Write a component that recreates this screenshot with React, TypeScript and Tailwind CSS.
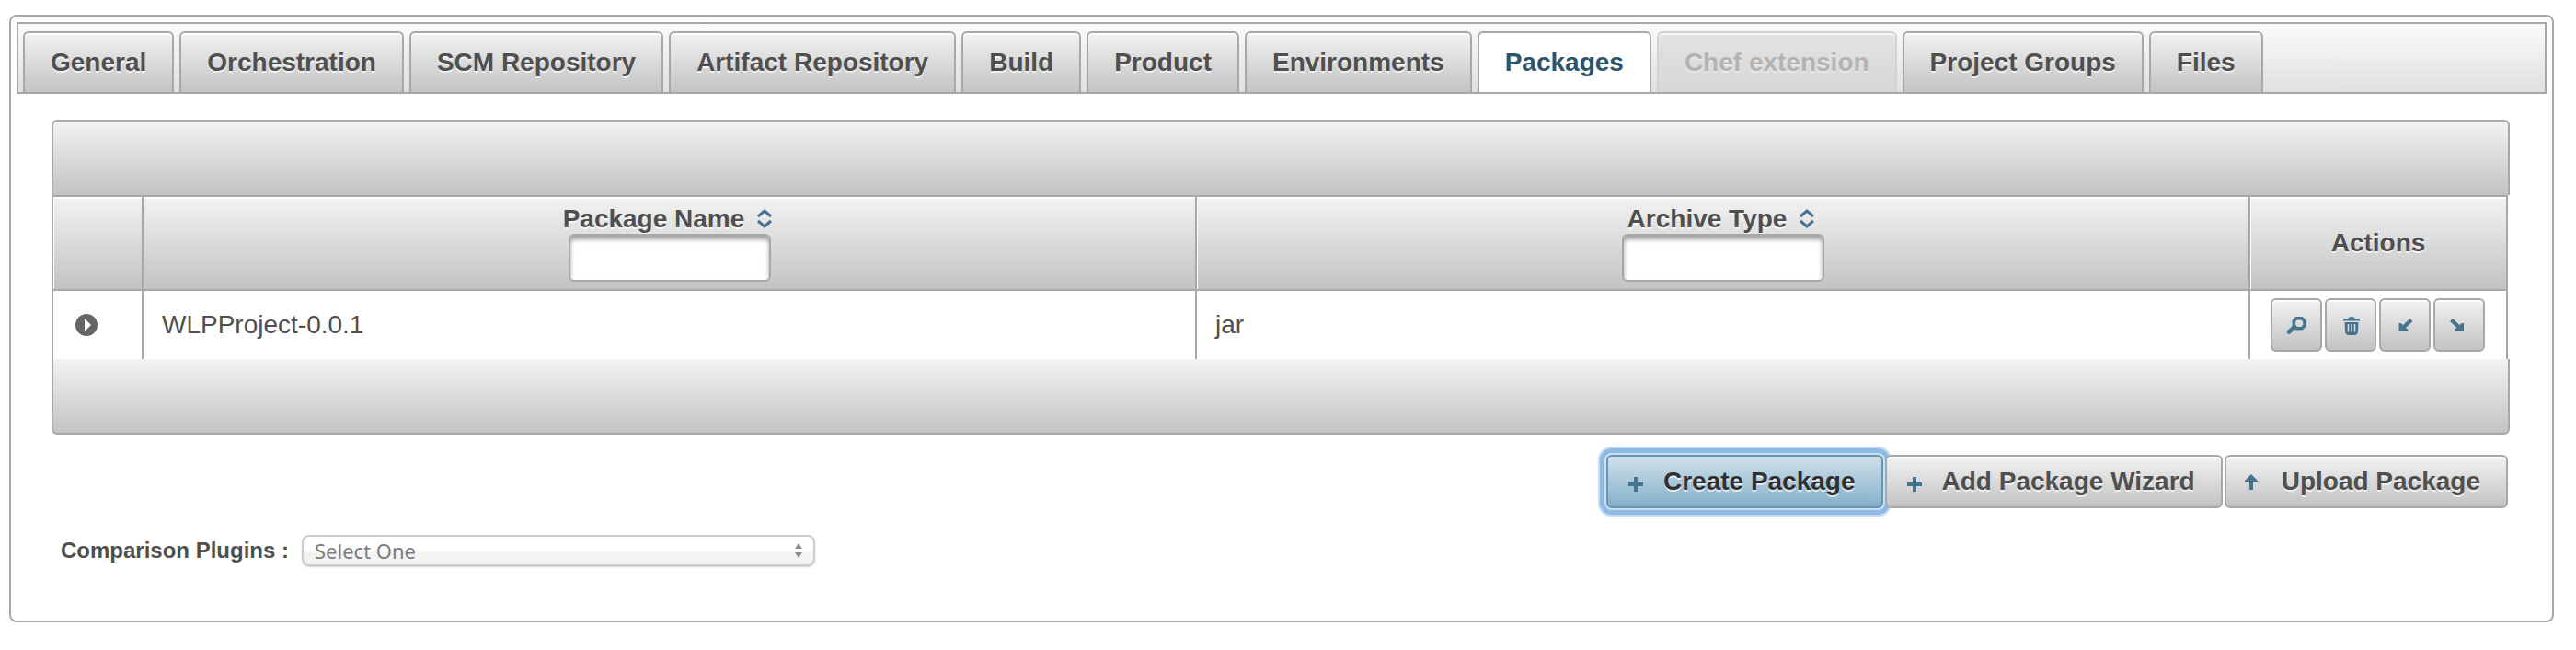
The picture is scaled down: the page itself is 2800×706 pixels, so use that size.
import React from 'react';

const tabs = [
  { label: 'General' },
  { label: 'Orchestration' },
  { label: 'SCM Repository' },
  { label: 'Artifact Repository' },
  { label: 'Build' },
  { label: 'Product' },
  { label: 'Environments' },
  { label: 'Packages', state: 'active' },
  { label: 'Chef extension', state: 'disabled' },
  { label: 'Project Groups' },
  { label: 'Files' },
];

const packages = [{ name: 'WLPProject-0.0.1', type: 'jar' }];

const raised =
  'border-2 border-[#a8a8a8] bg-linear-to-b from-[#f2f2f2] to-[#c3c3c3] shadow-[inset_0_2px_0_#ffffff] [text-shadow:0_2px_0_rgba(255,255,255,0.7)]';

const strip = 'h-[82px] border-2 border-[#a8a8a8] bg-linear-to-b from-[#f3f3f3] to-[#c3c3c3]';

const headCell =
  'h-[102px] border-t-2 border-l-2 border-[#a8a8a8] bg-linear-to-b from-[#f3f3f3] to-[#c3c3c3] p-0 text-center font-bold shadow-[inset_1px_2px_0_#ffffff] [text-shadow:0_2px_0_rgba(255,255,255,0.7)]';

const bodyCell = 'h-[76px] border-t-2 border-l-2 border-[#a8a8a8]';

const tabClass = (state?: string) => {
  if (state === 'active') {
    return 'border-2 border-[#a8a8a8] bg-white text-[#2c556c]';
  }
  if (state === 'disabled') {
    return 'border-2 border-[#d2d2d2] bg-linear-to-b from-[#e4e4e4] to-[#d6d6d6] text-[#b3b3b3] shadow-[inset_0_2px_0_#f4f4f4] [text-shadow:0_2px_0_rgba(255,255,255,0.4)]';
  }
  return raised;
};

const SortIcon: React.FC = () => (
  <svg width="20" height="24" viewBox="0 0 20 24" fill="none" stroke="#46748e" strokeWidth="3">
    <path d="M1 9 L8 3 L15 9" />
    <path d="M1 14 L8 20 L15 14" />
  </svg>
);

const PlusIcon: React.FC = () => (
  <svg width="32" height="32" viewBox="0 0 32 32" stroke="#46748e" strokeWidth="4">
    <path d="M8 19 H24 M16 11 V27" />
  </svg>
);

const UpIcon: React.FC = () => (
  <svg width="32" height="32" viewBox="0 0 32 32" fill="#46748e">
    <path d="M13 8 L20 15 V16 H15 V25 H11 V16 H6 V15 Z" />
  </svg>
);

const SearchIcon: React.FC = () => (
  <svg width="32" height="32" viewBox="0 0 32 32" fill="none" stroke="#46748e">
    <path d="M16 8.700 H22 L25 11.700 V16.800 L22 19.800 H16 L13.300 16.800 V11.700 Z" strokeWidth="3.600" strokeLinejoin="round" />
    <path d="M14 18 L8 23.500" strokeWidth="4.500" strokeLinecap="round" />
  </svg>
);

const TrashIcon: React.FC = () => (
  <svg width="32" height="32" viewBox="0 0 32 32" fill="#46748e">
    <path d="M8 9 H13 Q14 7 17 7 Q20 7 21 9 H26 V11.500 H8 Z" />
    <path d="M9.500 13 H24.500 L24 23 Q23.500 27 20 27 H14 Q10.500 27 10 23 Z" />
    <path d="M13.500 15 V23.500 M17 15 V23.500 M20.500 15 V23.500" stroke="#d4dade" strokeWidth="1.500" />
  </svg>
);

const DownLeftIcon: React.FC = () => (
  <svg width="32" height="32" viewBox="0 0 32 32" fill="#46748e">
    <path d="M21.500 9 L24.500 12 L17 19 L19.500 21 V23 H9.500 V14 H11.500 L14 16 Z" />
  </svg>
);

const DownRightIcon: React.FC = () => (
  <svg width="32" height="32" viewBox="0 0 32 32" fill="#46748e">
    <path d="M9 9 L6 12 L13.500 19 L11 21 V23 H21 V14 H19 L16.500 16 Z" />
  </svg>
);

const actions = [
  { label: 'View', icon: <SearchIcon /> },
  { label: 'Delete', icon: <TrashIcon /> },
  { label: 'Import', icon: <DownLeftIcon /> },
  { label: 'Export', icon: <DownRightIcon /> },
];

const TabBar: React.FC = () => (
  <nav className="flex gap-[6px] border-2 border-[#a8a8a8] bg-linear-to-b from-[#fbfbfb] to-[#e0e0e0] px-[5px] pt-2">
    {tabs.map((tab) => (
      <button
        key={tab.label}
        type="button"
        disabled={tab.state === 'disabled'}
        className={`h-[66px] rounded-t-md border-b-0 px-7 font-bold ${tabClass(tab.state)}`}
      >
        {tab.label}
      </button>
    ))}
  </nav>
);

const FilterHeader: React.FC<{ id: string; label: string }> = ({ id, label }) => (
  <div className="flex flex-col items-center">
    <label htmlFor={id} className="flex items-center gap-[14px]">
      {label}
      <SortIcon />
    </label>
    <input
      id={id}
      className="h-[52px] w-[220px] rounded-md border-2 border-[#a8a8a8] bg-white px-2 shadow-[inset_0_4px_5px_#a0a0a0]"
    />
  </div>
);

const PackageTable: React.FC = () => (
  <div>
    <div className={`rounded-t-md border-b-0 ${strip}`} />
    <div className="pr-[2px]">
      <table className="w-full table-fixed border-separate border-spacing-0 border-r-2 border-[#a8a8a8]">
        <colgroup>
          <col className="w-[98px]" />
          <col />
          <col />
          <col className="w-[280px]" />
        </colgroup>
        <thead>
          <tr>
            <th className={headCell} />
            <th className={headCell}>
              <FilterHeader id="package-name" label="Package Name" />
            </th>
            <th className={headCell}>
              <FilterHeader id="archive-type" label="Archive Type" />
            </th>
            <th className={headCell}>Actions</th>
          </tr>
        </thead>
        <tbody>
          {packages.map((item) => (
            <tr key={item.name}>
              <td className={`${bodyCell} pl-6`}>
                <button type="button" aria-label="Expand" className="block">
                  <svg width="24" height="24" viewBox="0 0 24 24">
                    <circle cx="12" cy="12" r="12" fill="#666666" />
                    <path d="M10 5 L17 12 L10 19 Z" fill="#ffffff" />
                  </svg>
                </button>
              </td>
              <td className={`${bodyCell} px-5`}>{item.name}</td>
              <td className={`${bodyCell} px-5`}>{item.type}</td>
              <td className={bodyCell}>
                <div className="flex justify-center gap-[3px] pr-[2px]">
                  {actions.map((action) => (
                    <button
                      key={action.label}
                      type="button"
                      aria-label={action.label}
                      className={`flex h-[58px] w-14 items-center justify-center rounded-md ${raised}`}
                    >
                      {action.icon}
                    </button>
                  ))}
                </div>
              </td>
            </tr>
          ))}
        </tbody>
      </table>
    </div>
    <div className={`rounded-b-md border-t-0 ${strip}`} />
  </div>
);

const App: React.FC = () => {
  return (
    <main className="min-h-screen bg-white px-[10px] pt-4 pr-6 pb-[30px] font-['Liberation_Sans',Arial,sans-serif] text-[28px] leading-8 text-[#4f4f4f]">
      <div className="rounded-lg border-2 border-[#a8a8a8] p-[6px] pb-[58px]">
        <TabBar />
        <div className="pt-7 pr-10 pl-[38px]">
          <PackageTable />
          <div className="flex justify-end gap-[2px] pt-[22px] pr-[2px]">
            <button
              type="button"
              className="flex h-[58px] items-center gap-[14px] rounded-md border-2 border-[#6896b0] bg-linear-to-b from-[#cfe0ea] to-[#85b1ca] pr-7 pl-[14px] font-bold text-[#303030] shadow-[0_0_0_2px_#cbe0f4,0_0_0_7px_#8fbae6,0_0_1px_9px_#c4dbf2] [text-shadow:0_2px_0_rgba(255,255,255,0.7)]"
            >
              <PlusIcon />
              Create Package
            </button>
            <button
              type="button"
              className={`relative flex h-[58px] items-center gap-[14px] rounded-md pr-7 pl-[14px] font-bold ${raised}`}
            >
              <PlusIcon />
              Add Package Wizard
            </button>
            <button
              type="button"
              className={`flex h-[58px] items-center gap-[14px] rounded-md pr-7 pl-[14px] font-bold ${raised}`}
            >
              <UpIcon />
              Upload Package
            </button>
          </div>
          <div className="flex items-center gap-[14px] pt-7 pl-[10px]">
            <label htmlFor="plugins" className="text-2xl leading-9 font-bold">
              Comparison Plugins :
            </label>
            <div className="grid items-center">
              <select
                id="plugins"
                className="col-start-1 row-start-1 h-[34px] w-[558px] appearance-none rounded-lg border-2 border-[#cccccc] bg-linear-to-b from-white from-45% to-[#f3f3f3] to-60% px-3 font-['Noto_Sans',sans-serif] text-[22px] leading-7 text-[#7c7c7c] shadow-[0_1px_2px_#d0d0d0]"
              >
                <option>Select One</option>
              </select>
              <svg
                className="pointer-events-none col-start-1 row-start-1 mr-[14px] justify-self-end"
                width="8"
                height="16"
                viewBox="0 0 8 16"
                fill="#8c8c8c"
              >
                <path d="M4 0 L8 6 H0 Z M4 16 L8 10 H0 Z" />
              </svg>
            </div>
          </div>
        </div>
      </div>
    </main>
  );
};

export default App;
